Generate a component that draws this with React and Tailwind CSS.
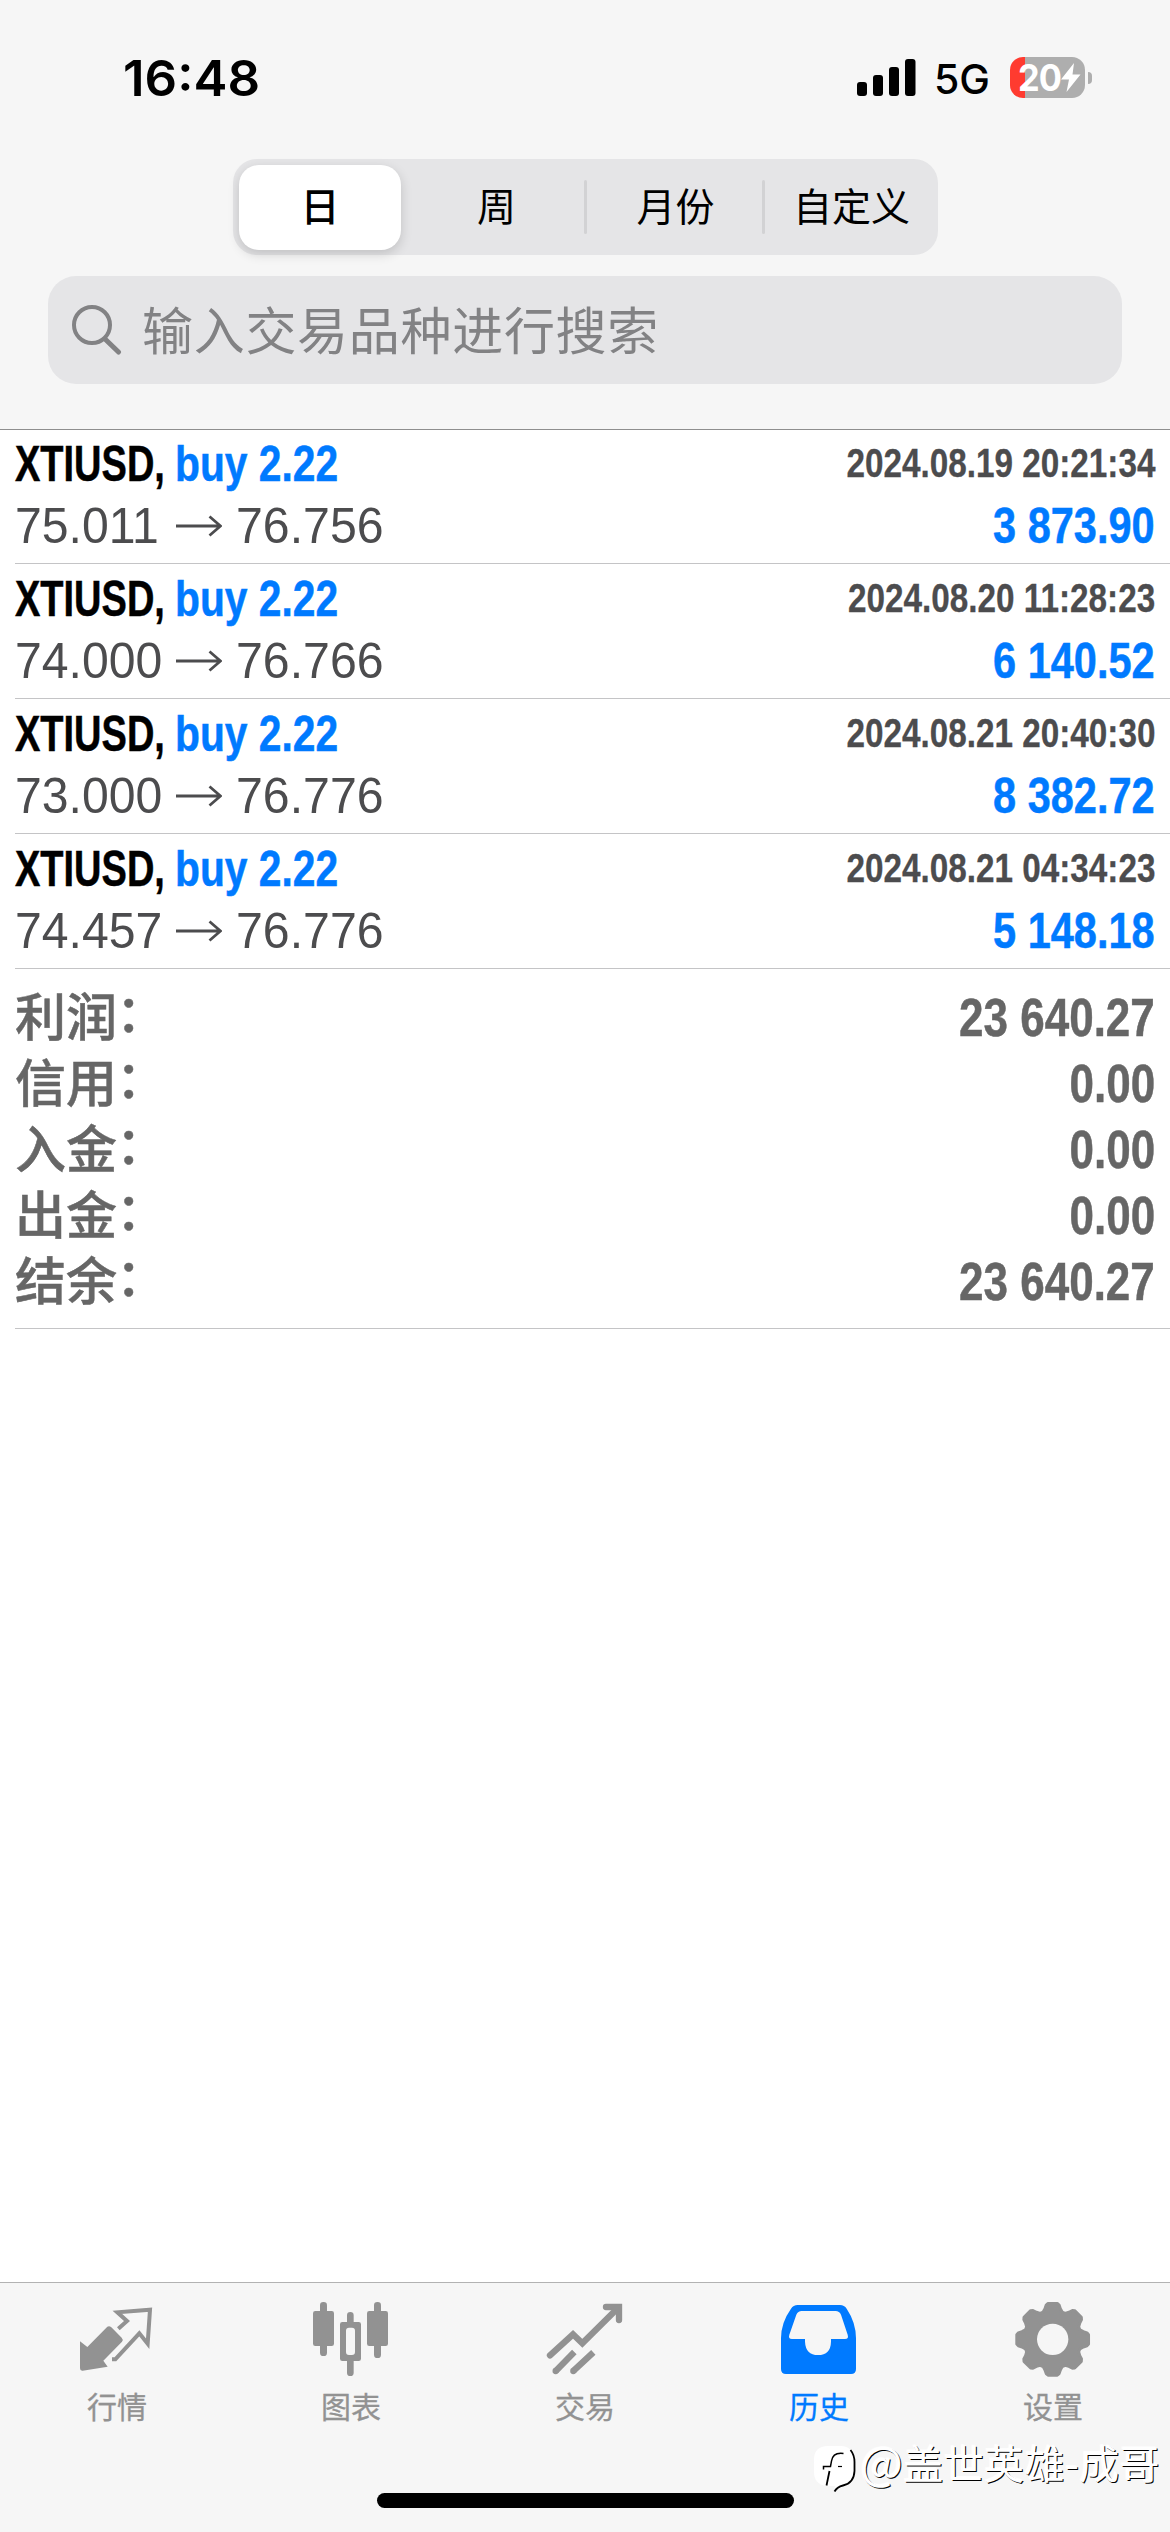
const sans = "font-['Liberation_Sans','Noto_Sans_CJK_SC',sans-serif]";

const deals = [
  { time: "2024.08.19 20:21:34", from: "75.011", to: "76.756", profit: "3 873.90" },
  { time: "2024.08.20 11:28:23", from: "74.000", to: "76.766", profit: "6 140.52" },
  { time: "2024.08.21 20:40:30", from: "73.000", to: "76.776", profit: "8 382.72" },
  { time: "2024.08.21 04:34:23", from: "74.457", to: "76.776", profit: "5 148.18" },
];

const totals = [
  ["利润", "23 640.27"],
  ["信用", "0.00"],
  ["入金", "0.00"],
  ["出金", "0.00"],
  ["结余", "23 640.27"],
];

function StatusBar() {
  return (
    <div className="flex h-[159px] items-start justify-between pl-[123px] pr-[78px] font-['Inter',sans-serif] text-black">
      <span className="mt-[48px] origin-left scale-x-[1.02] text-[50px] font-semibold leading-[60px]">16:48</span>
      <div className="mt-[57px] flex items-start">
        <svg className="mt-[2px] h-[37px] w-[59px]" viewBox="0 0 59 37">
          <rect x="0" y="23" width="10" height="14" rx="3" />
          <rect x="16" y="16" width="10" height="21" rx="3" />
          <rect x="32" y="8" width="10" height="29" rx="3" />
          <rect x="48" y="0" width="10.5" height="37" rx="3" />
        </svg>
        <span className="ml-[18px] w-[58px] origin-left text-[41px] font-medium leading-[45px]">5G</span>
        <div className="ml-[18px] flex h-[41px] w-[75px] items-center rounded-[13px] bg-[linear-gradient(90deg,#ff3b30_0_15px,#aeaeae_15px)] pl-[8px] text-white">
          <span className="w-[43px] origin-left scale-x-[0.93] text-[37px] font-bold leading-[41px] tracking-[-1px]">20</span>
          <svg className="h-[29px] w-[20px] shrink-0" viewBox="0 0 20 29" fill="currentColor">
            <path d="M13 0 0 16.5h8L5.5 29 19.5 11.5h-8z" />
          </svg>
        </div>
        <div className="ml-[3px] mt-[15px] h-[12px] w-[4px] rounded-r-full bg-[#aeaeae]" />
      </div>
    </div>
  );
}

function Segments() {
  return (
    <div className="ml-[233px] flex h-[96px] w-[705px] items-center rounded-[24px] bg-[#e5e5e7] font-['Noto_Sans_CJK_SC',sans-serif] text-[39px] leading-none text-black">
      <div className="ml-[6px] flex h-[85px] w-[162px] items-center justify-center rounded-[20px] bg-white pb-[5px] font-medium shadow-[0_4px_12px_rgba(0,0,0,0.16)]">日</div>
      <div className="ml-[8px] flex w-[175px] justify-center pb-[5px]">周</div>
      <div className="h-[54px] w-[3px] rounded bg-[#d2d2d4]" />
      <div className="flex w-[175px] justify-center pb-[5px] pl-[2px]">月份</div>
      <div className="h-[54px] w-[3px] rounded bg-[#d2d2d4]" />
      <div className="flex w-[173px] justify-center pb-[5px]">自定义</div>
    </div>
  );
}

function Search() {
  return (
    <div className="mx-[48px] mt-[21px] flex h-[108px] items-center rounded-[28px] bg-[#e5e5e7] pl-[24px] text-[#828284]">
      <svg className="h-[50px] w-[50px]" viewBox="0 0 50 50" fill="none" stroke="currentColor">
        <circle cx="20" cy="20" r="18" strokeWidth="4" />
        <path d="M33 34 46.5 47" strokeWidth="5" strokeLinecap="round" />
      </svg>
      <span className="ml-[20px] pb-[5px] font-['Noto_Sans_CJK_SC',sans-serif] text-[51px] leading-[60px] tracking-[0.7px]">输入交易品种进行搜索</span>
    </div>
  );
}

function Deal({ time, from, to, profit }) {
  return (
    <div className="h-[135px] border-b border-[#c4c4c6] pr-[15px] pt-[10px]">
      <div className="flex h-[50px] justify-between whitespace-nowrap font-bold">
        <div className="flex text-[50px] leading-[50px] [-webkit-text-stroke:0.5px_currentColor]">
          <span className="w-[160px] origin-left scale-x-[0.76] text-black">XTIUSD,</span>
          <span className="w-[180px] origin-left scale-x-[0.815] text-[#007aff]">buy 2.22</span>
        </div>
        <span className="origin-right scale-x-[0.832] text-[40px] leading-[48px] text-[#4c4c4e] [-webkit-text-stroke:0.3px_currentColor]">{time}</span>
      </div>
      <div className="mt-[12px] flex h-[50px] justify-between whitespace-nowrap text-[50px] leading-[50px] text-[#4c4c4e]">
        <div className="flex">
          <span className="w-[161px] origin-left scale-x-[0.963]">{from}</span>
          <svg className="mt-[14px] h-[22px] w-[46px]" viewBox="0 0 46 22" fill="none" stroke="currentColor" strokeWidth="2.8">
            <path d="M0 11H45M33.5 1.5 44.5 11 33.5 20.5" />
          </svg>
          <span className="ml-[14px] w-[160px] origin-left scale-x-[0.965]">{to}</span>
        </div>
        <span className="origin-right scale-x-[0.83] font-bold text-[#007aff] [-webkit-text-stroke:0.5px_currentColor]">{profit}</span>
      </div>
    </div>
  );
}

function Totals() {
  return (
    <div className="h-[360px] border-b border-[#c4c4c6] pr-[15px] pt-[16px] font-bold text-[#666]">
      {totals.map(([label, value]) => (
        <div key={label} className="flex h-[66px] justify-between whitespace-nowrap">
          <span className="flex font-['Noto_Sans_CJK_SC',sans-serif] text-[51px] font-medium leading-[59px] [-webkit-text-stroke:0.5px_currentColor]">
            <span>{label}</span>
            <span className="-ml-px leading-[51px]">：</span>
          </span>
          <span className="origin-right scale-x-[0.83] text-[53px] leading-[66px] [-webkit-text-stroke:0.5px_currentColor]">{value}</span>
        </div>
      ))}
    </div>
  );
}

function gearPath(cx, cy) {
  const pts = [];
  const tooth = [
    [-0.34, 87],
    [-0.25, 95],
    [-0.19, 105],
    [-0.13, 109],
    [0.13, 109],
    [0.19, 105],
    [0.25, 95],
    [0.34, 87],
  ];
  for (let i = 0; i < 8; i++) {
    const base = (i * Math.PI) / 4;
    for (const [da, r] of tooth) {
      pts.push(`${(cx + r * Math.sin(base + da)).toFixed(1)} ${(cy - r * Math.cos(base + da)).toFixed(1)}`);
    }
  }
  return `M${pts.join("L")}Z`;
}

const tabs = [
  {
    label: "行情",
    icon: (
      <svg className="size-[80px]" viewBox="231 90 240 240" fill="currentColor">
        <path d="M240 214 262 231 322 170Q328 166 334 172L365 203Q371 209 366 215L310 272 323 290 248 302Q240 303 240 295Z" />
        <path d="M355 176 381 153 352 127 450 119 443 221 418 190 346 268H336" fill="none" stroke="currentColor" strokeWidth="12" />
      </svg>
    ),
  },
  {
    label: "图表",
    icon: (
      <svg className="size-[80px]" viewBox="933 90 240 240" fill="currentColor">
        <rect x="960" y="96" width="21" height="162" rx="10" />
        <rect x="939" y="123" width="63" height="105" rx="7" />
        <rect x="1122" y="96" width="21" height="168" rx="10" />
        <rect x="1101" y="123" width="63" height="105" rx="7" />
        <path d="M1041 156V136a10 10 0 0 1 20 0V156H1076a7 7 0 0 1 7 7V266a7 7 0 0 1-7 7H1061V308a10 10 0 0 1-20 0V273H1027a7 7 0 0 1-7-7V163a7 7 0 0 1 7-7ZM1047 173Q1038 173 1038 182V246Q1038 255 1047 255H1056Q1065 255 1065 246V182Q1065 173 1056 173Z" fillRule="evenodd" />
      </svg>
    ),
  },
  {
    label: "交易",
    icon: (
      <svg className="size-[80px]" viewBox="285 90 240 240" fill="none" stroke="currentColor" strokeWidth="19">
        <path d="M300 256 369 193 397 220 506 112" strokeLinecap="round" />
        <path d="M468 111H507V150" strokeLinecap="round" />
        <path d="M318 302 373 246M371 302 430 247" />
        <g fill="currentColor" stroke="none">
          <path d="M498 102H516V120Z" />
          <circle cx="317" cy="303" r="9.5" />
          <circle cx="370" cy="303" r="9.5" />
        </g>
      </svg>
    ),
  },
  {
    label: "历史",
    active: true,
    icon: (
      <svg className="size-[80px]" viewBox="987 90 240 240" fill="currentColor">
        <path
          d="M1043 105H1170Q1183 105 1190 116Q1218 158 1218 205V297Q1218 312 1203 312H1008Q993 312 993 297V205Q993 158 1023 116Q1030 105 1043 105ZM1055 123Q1044 123 1039 134L1018 194Q1014 207 1026 207H1065V215Q1067 255 1104 255Q1142 255 1143 215V207H1185Q1197 207 1193 194L1173 134Q1168 123 1157 123Z"
          fillRule="evenodd"
        />
      </svg>
    ),
  },
  {
    label: "设置",
    icon: (
      <svg className="size-[80px]" viewBox="699 90 240 240" fill="none" stroke="currentColor">
        <path d={gearPath(818, 208)} fill="currentColor" strokeWidth="8" strokeLinejoin="round" />
        <circle cx="818" cy="208" r="47" className="fill-[#f6f6f6]" stroke="none" />
      </svg>
    ),
  },
];

function TabBar() {
  return (
    <div className="relative h-[250px] border-t border-[#b2b2b2] bg-[#f6f6f6] font-['Noto_Sans_CJK_SC',sans-serif]">
      <div className="grid grid-cols-5 pt-[17px]">
        {tabs.map((t) => (
          <div key={t.label} className={t.active ? "flex flex-col items-center text-[#007aff]" : "flex flex-col items-center text-[#929292]"}>
            {t.icon}
            <span className="mt-[3px] text-[30px] leading-[44px] [-webkit-text-stroke:0.3px_currentColor]">{t.label}</span>
          </div>
        ))}
      </div>
      <div className="mx-auto mt-[66px] h-[15px] w-[417px] rounded-full bg-black" />
      <div className="absolute right-[10px] top-[154px] flex items-start text-white">
        <svg className="mr-[3px] mt-[9px] h-[48px] w-[43px]" viewBox="0 0 43 48">
          <path d="M14 0H27Q39 0 40 15V24Q40 37 27 40L20 46 21 40H12Q0 38 0 26V14Q0 0 14 0Z" fill="#fff" />
          <g fill="none" stroke="#000">
            <path d="M36.5 4Q40.500 9 40.500 16V25Q40 37 29 39.500 23 41 20.500 45.500" strokeWidth="1.8" />
            <path d="M29.500 7.500Q19 6 17.500 15L16.500 20.500H9.500V23.500" strokeWidth="1.5" />
            <path d="M15.500 25 12.500 39.500" strokeWidth="1.8" />
            <path d="M24 20.500H28" strokeWidth="1.2" />
          </g>
        </svg>
        <span className="w-[43px] text-[45px] leading-[48px] [text-shadow:1px_1px_0_#000,-1px_-1px_1px_#fff]">@</span>
        <span className="whitespace-nowrap text-[40px] leading-[50px] tracking-[0.4px] [text-shadow:1px_1px_0_#000,-1px_-1px_1px_#fff]">盖世英雄-成哥</span>
      </div>
    </div>
  );
}

export default function App() {
  return (
    <div className={`flex h-[2532px] w-[1170px] flex-col overflow-hidden bg-white ${sans}`}>
      <header className="h-[430px] shrink-0 border-b border-[#8e8e8e] bg-[#f6f6f6]">
        <StatusBar />
        <Segments />
        <Search />
      </header>
      <main className="-mt-px flex-1 pl-[15px]">
        {deals.map((d) => (
          <Deal key={d.time} {...d} />
        ))}
        <Totals />
      </main>
      <TabBar />
    </div>
  );
}
